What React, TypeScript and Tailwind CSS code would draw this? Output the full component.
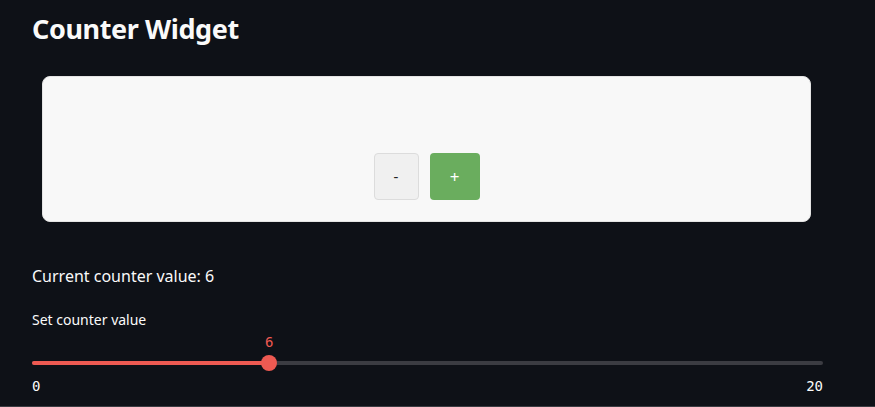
import React, { useState } from 'react';

const App = () => {
    const [count, setCount] = useState(6);
    const min = 0;
    const max = 20;
    const pct = ((count - min) / (max - min)) * 100;

    return (
        <div
            className="h-[407px] w-full bg-[#0e1117] text-[#fafafa] border-b border-[#3b3c42] overflow-hidden"
            style={{ fontFamily: '"Noto Sans", "Open Sans", sans-serif' }}
        >
            <div className="px-8 pt-[10px]">
                <h1 className="text-[27px] font-bold leading-[38px] tracking-[-0.4px]">Counter Widget</h1>

                <div className="mt-[28px] ml-[10px] mr-[32px] h-[146px] rounded-lg bg-[#f8f8f8] border border-[#e4e4e4] flex items-end justify-center pb-[21px]">
                    <div className="flex gap-[11px]">
                        <button
                            onClick={() => setCount((c) => Math.max(min, c - 1))}
                            className="w-[45px] h-[47px] rounded-[4px] bg-[#f0f0f0] border border-[#dcdcdc] text-[#222] text-[15px]"
                        >
                            -
                        </button>
                        <button
                            onClick={() => setCount((c) => Math.min(max, c + 1))}
                            className="w-[50px] h-[47px] rounded-[4px] bg-[#6aad5e] text-white text-[17px]"
                        >
                            +
                        </button>
                    </div>
                </div>

                <p className="mt-[42px] text-[16px] leading-[24px]">Current counter value: {count}</p>

                <p className="mt-[22px] text-[14px] leading-[20px]">Set counter value</p>

                <div className="relative mt-[22px] h-[22px]">
                    <div className="absolute left-0 right-[20px] top-[9px] h-[4px] rounded-full bg-[#3b3c42]" />
                    <div
                        className="absolute left-0 top-[9px] h-[4px] rounded-l-full bg-[#ee5a52]"
                        style={{ width: `calc((100% - 20px) * ${pct / 100})` }}
                    />
                    <div
                        className="absolute top-[3px] h-4 w-4 -ml-2 rounded-full bg-[#ee5a52]"
                        style={{ left: `calc((100% - 20px) * ${pct / 100})` }}
                    />
                    <div
                        className="absolute -top-[20px] -translate-x-1/2 text-[14px] text-[#ee5a52]"
                        style={{ left: `calc((100% - 20px) * ${pct / 100})`, fontFamily: '"DejaVu Sans Mono", monospace' }}
                    >
                        {count}
                    </div>
                </div>
                <div
                    className="mr-[20px] mt-[2px] flex justify-between text-[14px] leading-[20px]"
                    style={{ fontFamily: '"DejaVu Sans Mono", monospace' }}
                >
                    <span>{min}</span>
                    <span>{max}</span>
                </div>
            </div>
        </div>
    );
};

export default App;
